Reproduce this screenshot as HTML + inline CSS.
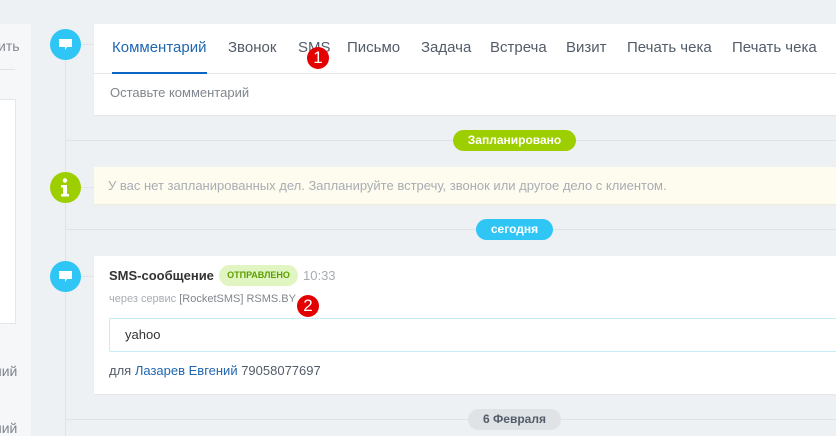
<!DOCTYPE html>
<html><head><meta charset="utf-8"><style>
*{margin:0;padding:0;box-sizing:border-box}
body{width:836px;height:436px;overflow:hidden;background:#eef1f4;font-family:"Liberation Sans",sans-serif;position:relative}
.a{position:absolute}
.t{position:absolute;white-space:nowrap}
.tab{position:absolute;white-space:nowrap;font-size:15px;color:#535c69;top:39px}
.circ{position:absolute;width:31px;height:31px;border-radius:50%}
.badge{position:absolute;height:21px;border-radius:11px;color:#fff;font-weight:bold;font-size:12px;line-height:21px;text-align:center}
.hl{position:absolute;height:1px;background:#dfe3e6;left:66px;right:0}
.red{position:absolute;width:22px;height:22px;border-radius:50%;background:#e30000;color:#fff;font-size:17px;line-height:22px;text-align:center}
</style></head><body>
<div class="a" style="left:0;top:24px;width:31px;height:412px;background:#f6f7f9"></div>
<div class="t" style="left:-2px;top:38px;font-size:14px;color:#80868e">ить</div>
<div class="a" style="left:0;top:69px;width:15px;height:1px;background:#dfe3e6"></div>
<div class="a" style="left:0;top:99px;width:16px;height:225px;background:#fff;border:1px solid #e4e7ea;border-left:none"></div>
<div class="t" style="left:-6px;top:363px;font-size:14px;color:#80868e">ний</div>
<div class="t" style="left:-6px;top:420px;font-size:14px;color:#80868e">ний</div>

<div class="a" style="left:65px;top:44px;width:1px;height:392px;background:#dfe3e6"></div>
<div class="a" style="left:66px;top:44px;width:28px;height:1px;background:#dfe3e6"></div>
<div class="a" style="left:66px;top:187px;width:28px;height:1px;background:#dfe3e6"></div>
<div class="a" style="left:66px;top:276px;width:28px;height:1px;background:#dfe3e6"></div>

<div class="circ" style="left:50px;top:29px;background:#2fc6f6"></div>
<svg class="a" style="left:58px;top:38px" width="15" height="13" viewBox="0 0 15 13"><path d="M1 1h13v8H9l-2 3V9H1z" fill="#fff"/></svg>
<div class="circ" style="left:50px;top:172px;background:#9dcf00"></div>
<svg class="a" style="left:59px;top:178px" width="12" height="19" viewBox="0 0 12 19"><circle cx="6" cy="2.5" r="2.2" fill="#fff"/><path d="M2 7h6v9h2v2.5H2V16h2V9.5H2z" fill="#fff"/></svg>
<div class="circ" style="left:50px;top:261px;background:#2fc6f6"></div>
<svg class="a" style="left:58px;top:270px" width="15" height="13" viewBox="0 0 15 13"><path d="M1 1h13v8H9l-2 3V9H1z" fill="#fff"/></svg>

<div class="a" style="left:94px;top:24px;width:742px;height:91px;background:#fff;box-shadow:0 1px 1px #e2e5e8"></div>
<div class="a" style="left:94px;top:73px;width:742px;height:1px;background:#e3e6e9"></div>
<div class="a" style="left:112px;top:72px;width:95px;height:2px;background:#0b66c3"></div>
<div class="tab" style="left:112px;color:#2067b0">Комментарий</div>
<div class="tab" style="left:228px">Звонок</div>
<div class="tab" style="left:298px">SMS</div>
<div class="tab" style="left:347px">Письмо</div>
<div class="tab" style="left:421px">Задача</div>
<div class="tab" style="left:490px">Встреча</div>
<div class="tab" style="left:566px">Визит</div>
<div class="tab" style="left:627px">Печать чека</div>
<div class="tab" style="left:732px">Печать чека</div>
<div class="t" style="left:110px;top:85px;font-size:13px;color:#80868e">Оставьте комментарий</div>
<div class="red" style="left:307px;top:47px">1</div>

<div class="hl" style="top:140px"></div>
<div class="badge" style="left:453px;top:130px;width:123px;background:#9dcf00">Запланировано</div>

<div class="a" style="left:94px;top:167px;width:742px;height:37px;background:#fefcee;box-shadow:0 1px 1px #eceae0"></div>
<div class="t" style="left:108px;top:178px;font-size:13px;color:#a8adb4">У вас нет запланированных дел. Запланируйте встречу, звонок или другое дело с клиентом.</div>

<div class="hl" style="top:229px"></div>
<div class="badge" style="left:476px;top:219px;width:77px;background:#2fc6f6">сегодня</div>

<div class="a" style="left:94px;top:256px;width:742px;height:138px;background:#fff;box-shadow:0 1px 1px #e2e5e8"></div>
<div class="t" style="left:109px;top:268px;font-size:13px;font-weight:bold;color:#333">SMS-сообщение</div>
<div class="a" style="left:219px;top:265px;width:79px;height:21px;border-radius:11px;background:#e0f5c2;color:#5e9e00;font-size:9px;font-weight:bold;line-height:21px;text-align:center">ОТПРАВЛЕНО</div>
<div class="t" style="left:303px;top:268px;font-size:13px;color:#a8adb4">10:33</div>
<div class="t" style="left:109px;top:293px;font-size:11px;color:#a8adb4">через сервис <span style="color:#80868e">[RocketSMS] RSMS.BY</span></div>
<div class="red" style="left:297px;top:295px">2</div>
<div class="a" style="left:109px;top:318px;width:740px;height:34px;border:1px solid #c6eef9;border-radius:2px;background:#fff"></div>
<div class="t" style="left:125px;top:327px;font-size:13px;color:#333">yahoo</div>
<div class="t" style="left:109px;top:363px;font-size:13px;color:#535c69">для <span style="color:#2067b0">Лазарев Евгений</span> 79058077697</div>

<div class="hl" style="top:419px"></div>
<div class="badge" style="left:468px;top:409px;width:93px;background:#dfe3e6;color:#535c69">6 Февраля</div>
</body></html>
